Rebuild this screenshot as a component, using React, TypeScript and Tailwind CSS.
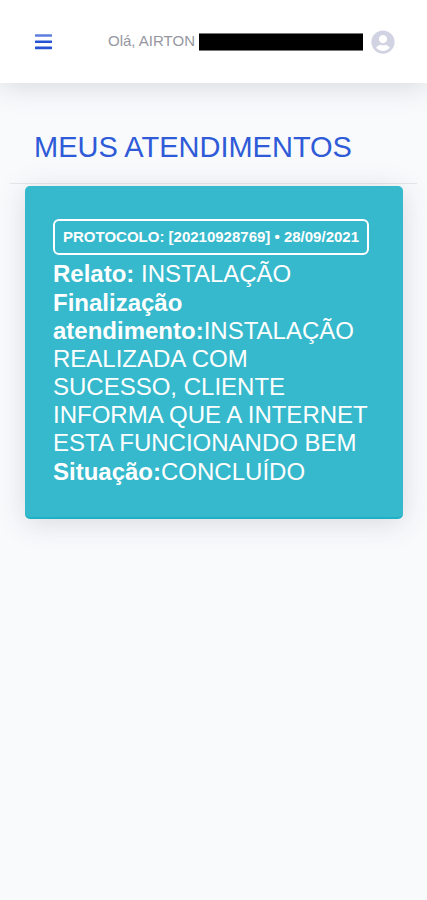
import { FaUserCircle } from "react-icons/fa"

const atendimentos = [
  {
    protocolo: "20210928769",
    data: "28/09/2021",
    relato: "INSTALAÇÃO",
    finalizacao:
      "INSTALAÇÃO REALIZADA COM SUCESSO, CLIENTE INFORMA QUE A INTERNET ESTA FUNCIONANDO BEM",
    situacao: "CONCLUÍDO",
  },
]

function MenuIcon() {
  return (
    <svg width="17" height="16" viewBox="0 0 17 16" fill="currentColor" aria-hidden="true">
      <rect y="0.2" width="17" height="2.6" rx="0.4" opacity="0.75" />
      <rect y="6.5" width="17" height="2.6" rx="0.4" />
      <rect y="12.6" width="17" height="2.6" rx="0.4" />
    </svg>
  )
}

function Header() {
  return (
    <header className="flex h-[83px] items-center justify-between bg-white pr-8 pl-[35px] shadow-[0_4px_28px_rgba(58,59,69,0.17)]">
      <button type="button" aria-label="Abrir menu" className="text-[#2653d4]">
        <MenuIcon />
      </button>
      <a href="#perfil" className="flex items-center gap-2">
        <span className="flex items-center gap-1 text-[15px] text-[#96979f]">
          Olá, AIRTON
          <span className="h-[18px] w-[164px] border-y border-[#777] bg-black" />
        </span>
        <FaUserCircle size={24} className="text-[#d1d3e2]" />
      </a>
    </header>
  )
}

export default function App() {
  return (
    <div className="min-h-screen bg-[#f8fafc] font-['Liberation_Sans',Arial,sans-serif]">
      <Header />
      <main className="px-[10px] pt-12">
        <h1 className="px-6 text-[29px] leading-8 text-[#2f5bd8]">
          MEUS ATENDIMENTOS
        </h1>
        <hr className="mt-5 mb-[2px] border-[#e6e7eb]" />
        {atendimentos.map((item) => (
          <article
            key={item.protocolo}
            className="mr-[14px] ml-[15px] rounded-[5px] border-b-2 border-[#1eb0c5] bg-[#36b9cc] px-7 pt-[33px] pb-[31px] text-white shadow-[0_4px_28px_rgba(58,59,69,0.17)]"
          >
            <h2 className="inline-block rounded-md border-2 border-white px-[8px] py-[6px] text-[15px] leading-5 font-bold whitespace-nowrap">
              PROTOCOLO: [{item.protocolo}] • {item.data}
            </h2>
            <div className="mt-[5px] flex flex-col gap-px text-2xl leading-7">
              <p>
                <strong>Relato:</strong> {item.relato}
              </p>
              <p>
                <strong>Finalização atendimento:</strong>
                {item.finalizacao}
              </p>
              <p>
                <strong>Situação:</strong>
                {item.situacao}
              </p>
            </div>
          </article>
        ))}
      </main>
    </div>
  )
}
